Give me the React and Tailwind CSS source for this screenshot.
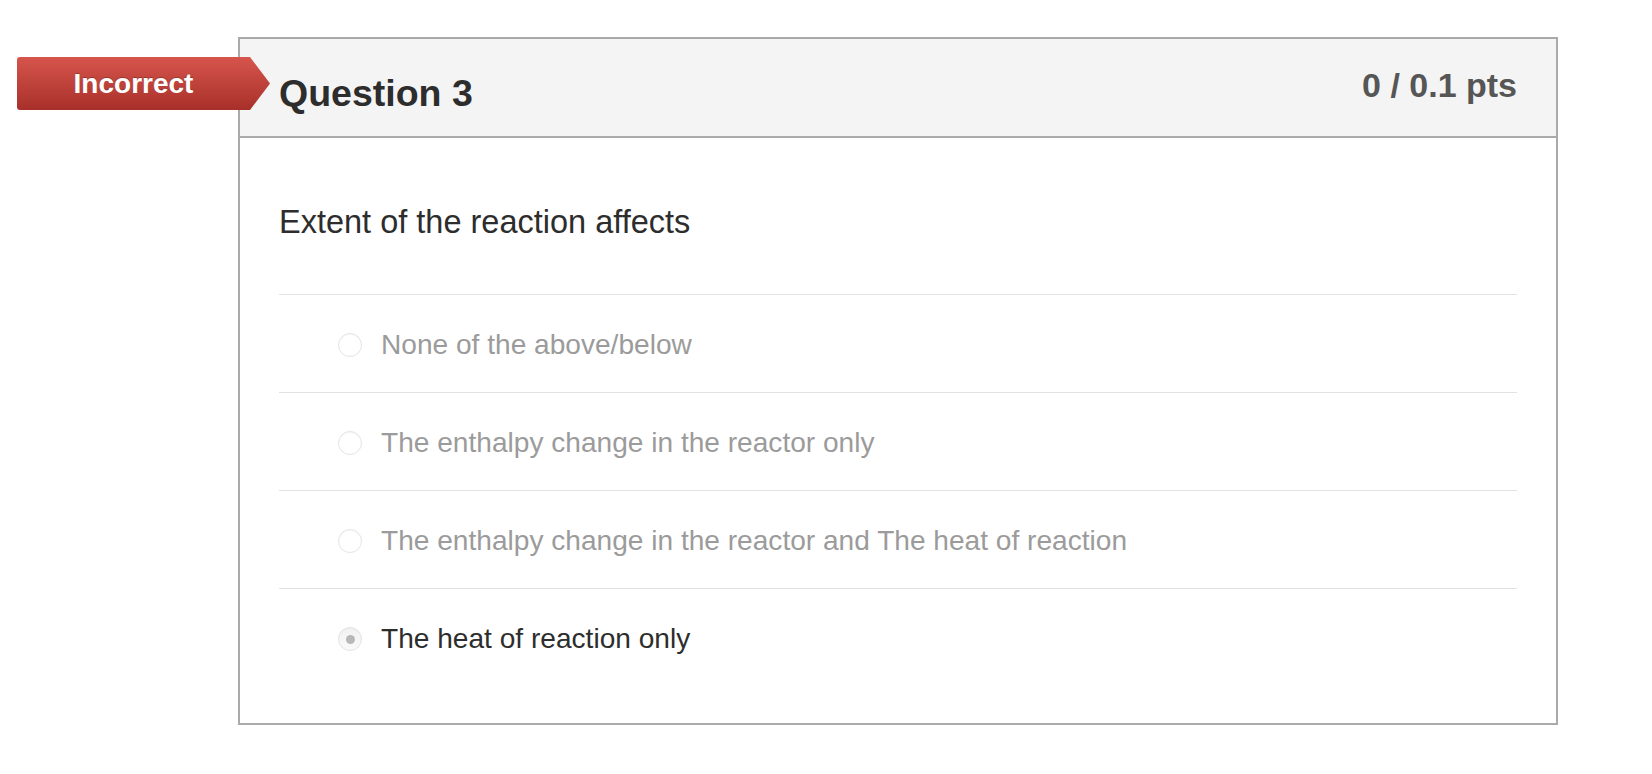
import React from "react";

const answers = [
	{ text: "None of the above/below", selected: false },
	{ text: "The enthalpy change in the reactor only", selected: false },
	{ text: "The enthalpy change in the reactor and The heat of reaction", selected: false },
	{ text: "The heat of reaction only", selected: true },
];

const Radio = ({ selected }) => (
	<span
		className={`flex h-[24px] w-[24px] flex-shrink-0 items-center justify-center rounded-full border border-[#e4e4e4] ${
			selected ? "bg-gradient-to-b from-[#f2f2f2] to-[#fafafa]" : "bg-white"
		} shadow-[inset_0_1px_1px_rgba(0,0,0,0.04)]`}
	>
		{selected && <span className="h-[9px] w-[9px] rounded-full bg-[#b8b8b8]"></span>}
	</span>
);

export default function App() {
	return (
		<div
			className="min-h-screen bg-white pt-[37px]"
			style={{ fontFamily: '"Liberation Sans", Arial, sans-serif' }}
		>
			<div className="relative ml-[238px] w-[1320px] border-2 border-[#aaaaaa]">
				{/* --- Result badge --- */}
				<div
					className="absolute left-[-223px] top-[18px] flex h-[53px] w-[253px] items-center rounded-l-[3px] bg-gradient-to-b from-[#d6554c] to-[#a8302a]"
					style={{ clipPath: "polygon(0 0, 233px 0, 100% 50%, 233px 100%, 0 100%)" }}
				>
					<span className="w-[233px] text-center text-[28px] font-bold leading-none text-white [text-shadow:0_-1px_0_rgba(0,0,0,0.25)]">
						Incorrect
					</span>
				</div>

				{/* --- Header --- */}
				<div className="flex h-[99px] items-start justify-between border-b-2 border-[#aaaaaa] bg-[#f4f4f4] px-[39px] pt-[29px]">
					<h2 className="mt-[7px] text-[37.5px] font-bold leading-none text-[#2d2d2d]">Question 3</h2>
					<div className="text-[34px] font-bold leading-none text-[#565656]">0 / 0.1 pts</div>
				</div>

				{/* --- Body --- */}
				<div className="px-[39px] pb-[37px] pt-[65px]">
					<p className="mb-[53px] text-[32.5px] leading-[38px] text-[#2d2d2d]">Extent of the reaction affects</p>
					{answers.map((a, i) => (
						<div
							key={i}
							className="flex h-[98px] items-center gap-[19px] border-t border-[#e2e2e2] pl-[59px] pt-[3px]"
						>
							<Radio selected={a.selected} />
							<span className={`text-[28.1px] leading-none ${a.selected ? "text-[#2d2d2d]" : "text-[#9b9b9b]"}`}>
								{a.text}
							</span>
						</div>
					))}
				</div>
			</div>
		</div>
	);
}
